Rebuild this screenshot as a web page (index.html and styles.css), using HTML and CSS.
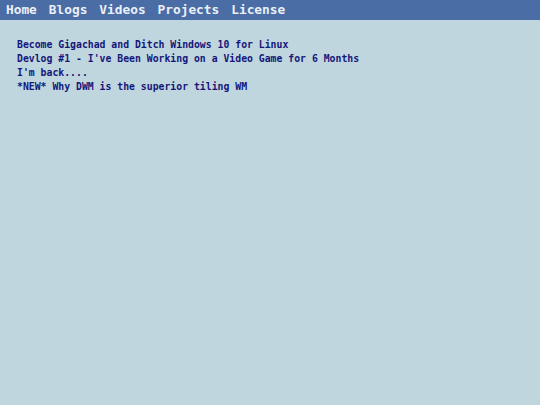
FILE: index.html
```html
<!DOCTYPE html>
<html>
<head>
<meta charset="utf-8">
<link rel="stylesheet" href="styles.css">
</head>
<body>
<nav class="topbar">
  <a class="nav-link" href="#">Home</a>
  <a class="nav-link" href="#">Blogs</a>
  <a class="nav-link" href="#">Videos</a>
  <a class="nav-link" href="#">Projects</a>
  <a class="nav-link" href="#">License</a>
</nav>
<main class="posts">
  <a class="post" href="#">Become Gigachad and Ditch Windows 10 for Linux</a>
  <a class="post" href="#">Devlog #1 - I've Been Working on a Video Game for 6 Months</a>
  <a class="post" href="#">I'm back....</a>
  <a class="post" href="#">*NEW* Why DWM is the superior tiling WM</a>
</main>
</body>
</html>
```
FILE: styles.css
```css
html, body {
  margin: 0;
  padding: 0;
  background: #c0d6de;
  height: 100%;
}
body {
  font-family: "DejaVu Sans Mono", "Liberation Mono", monospace;
  font-weight: bold;
}
.topbar {
  display: flex;
  align-items: center;
  gap: 12px;
  height: 20px;
  padding-left: 6px;
  background: #4a6da6;
}
.nav-link {
  color: #eaf0f7;
  text-decoration: none;
  font-size: 12.8px;
  line-height: 20px;
}
.posts {
  display: flex;
  flex-direction: column;
  padding: 18px 17px;
}
.post {
  color: #14167a;
  text-decoration: none;
  font-size: 9.8px;
  line-height: 14px;
}
```
